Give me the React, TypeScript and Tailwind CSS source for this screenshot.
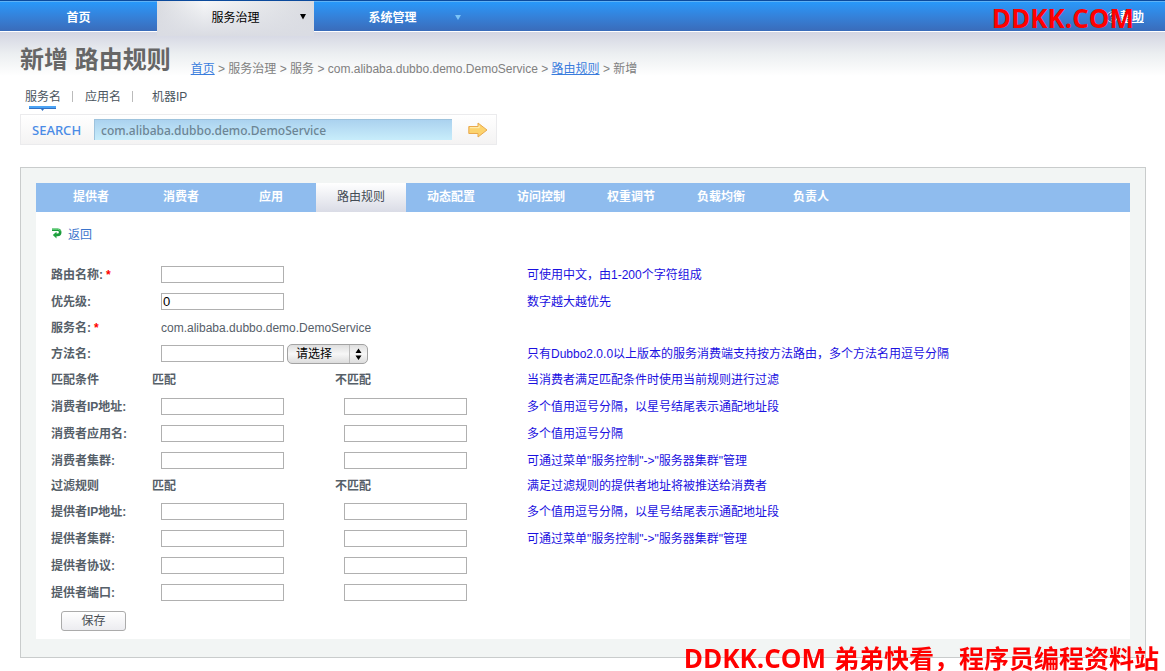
import React from "react";

type Field = {
  id: string;
  label: string;
  hint?: string;
};

const tabs = ["提供者", "消费者", "应用", "路由规则", "动态配置", "访问控制", "权重调节", "负载均衡", "负责人"];

const consumerFields: Field[] = [
  { id: "consumer-ip", label: "消费者IP地址:", hint: "多个值用逗号分隔，以星号结尾表示通配地址段" },
  { id: "consumer-app", label: "消费者应用名:", hint: "多个值用逗号分隔" },
  { id: "consumer-cluster", label: "消费者集群:", hint: '可通过菜单"服务控制"->"服务器集群"管理' },
];

const providerFields: Field[] = [
  { id: "provider-ip", label: "提供者IP地址:", hint: "多个值用逗号分隔，以星号结尾表示通配地址段" },
  { id: "provider-cluster", label: "提供者集群:", hint: '可通过菜单"服务控制"->"服务器集群"管理' },
  { id: "provider-protocol", label: "提供者协议:" },
  { id: "provider-port", label: "提供者端口:" },
];

const rowClass = "grid grid-cols-[101px_183px_192px_1fr] items-center";
const inputClass =
  "block h-[17px] w-[123px] border border-[#b0b0b0] bg-white px-px text-[13px] leading-[15px] text-black outline-none";
const labelClass = "font-bold text-[#566069]";
const hintClass = "whitespace-nowrap text-[#1a10e0]";

function Star() {
  return <span className="ml-[3px] text-[#f00]">*</span>;
}

function SectionRow({ title, hint, height }: { title: string; hint: string; height: string }) {
  return (
    <div className={`${rowClass} ${height}`}>
      <span className={labelClass}>{title}</span>
      <span className={labelClass}>匹配</span>
      <span className={labelClass}>不匹配</span>
      <span className={hintClass}>{hint}</span>
    </div>
  );
}

function PairRow({ field }: { field: Field }) {
  return (
    <div className={`${rowClass} h-[27px]`}>
      <label htmlFor={field.id} className={labelClass}>
        {field.label}
      </label>
      <div className="pl-[9px]">
        <input id={field.id} type="text" className={inputClass} />
      </div>
      <div className="pl-[9px]">
        <input id={`${field.id}-not`} aria-label={`${field.label} 不匹配`} type="text" className={inputClass} />
      </div>
      <span className={hintClass}>{field.hint}</span>
    </div>
  );
}

function Header() {
  return (
    <header className="relative border-t border-[#0b4a9c]">
      <nav className="flex h-[30px] border-t border-[#5fb2f5] bg-linear-to-b from-[#2798fa] to-[#3a6cba] text-center text-xs leading-[32px] text-white">
        <a href="#home" className="w-[157px] font-bold">
          首页
        </a>
        <a
          href="#governance"
          className="relative z-10 -mt-px h-[35px] w-[157px] bg-linear-to-r from-[#d9dbe0] via-[#f6f7f8] via-30% to-[#d9dbe0] leading-[34px] text-black"
        >
          <span className="absolute inset-0 bg-linear-to-b from-transparent to-[#dadce3]"></span>
          <span className="relative">服务治理</span>
          <svg className="absolute top-[13px] right-2 h-[6px] w-[6px]" viewBox="0 0 6 6">
            <path d="M0 0h6L3 5.5z" fill="#000" />
          </svg>
        </a>
        <a href="#system" className="relative w-[157px] font-bold">
          系统管理
          <svg className="absolute top-[13px] right-[10px] h-[5px] w-[6px]" viewBox="0 0 6 5">
            <path d="M0 0h6L3 5z" fill="#7cc4f7" />
          </svg>
        </a>
        <a href="#help" className="mr-[21px] ml-auto flex items-center gap-[2px] font-bold underline">
          <svg className="h-3 w-3" viewBox="0 0 12 12">
            <circle cx="6" cy="6" r="5.3" fill="#3b62b8" stroke="#b9d6f5" strokeWidth="1" />
            <path d="M4.2 4.6a1.8 1.8 0 1 1 2.6 1.6c-.6.3-.8.6-.8 1.1M6 8.3v1.2" fill="none" stroke="#fff" strokeWidth="1.3" />
          </svg>
          帮助
        </a>
      </nav>
    </header>
  );
}

export default function App() {
  return (
    <div className="bg-white font-['Liberation_Sans','Noto_Sans_CJK_SC',sans-serif] text-xs leading-4 text-[#566069]">
      <Header />

      <div className="border-t border-white bg-linear-to-b from-[#d3d5e2] via-[#eceff1] via-[22px] to-white to-[44px] px-5 pt-[13px]">
        <div className="flex h-8 items-end">
          <h1 className="self-start text-2xl leading-[30px] font-bold text-[#666]">新增 路由规则</h1>
          <p className="ml-5 whitespace-nowrap text-[#808080]">
            <a href="#home" className="text-[#3b7ddd] underline">
              首页
            </a>{" "}
            &gt; 服务治理 &gt; 服务 &gt; com.alibaba.dubbo.demo.DemoService &gt;{" "}
            <a href="#routes" className="text-[#3b7ddd] underline">
              路由规则
            </a>{" "}
            &gt; 新增
          </p>
        </div>

        <div className="mt-3 flex h-[25px] pl-[5px] text-[#4a555e]">
          <button type="button" className="flex flex-col items-center">
            <span className="leading-4">服务名</span>
            <svg className="mt-px mr-[2px] h-[5px] w-[27px]" viewBox="0 0 27 5">
              <path d="M0 0h27v2H0z" fill="#4aa3f5" />
              <path d="M0 2h27v1H15l-1.500 2L12 3H0z" fill="#3272c4" />
            </svg>
          </button>
          <span className="mt-[2px] ml-[11px] h-[11px] w-px bg-[#bbb]"></span>
          <button type="button" className="ml-[12px] self-start">
            应用名
          </button>
          <span className="mt-[2px] ml-[11px] h-[11px] w-px bg-[#bbb]"></span>
          <button type="button" className="ml-[19px] self-start">
            机器IP
          </button>
        </div>

        <form className="flex h-[31px] w-[477px] items-center border border-[#ebebed] bg-linear-to-b from-white to-[#f4f3f3] font-['Noto_Sans','Noto_Sans_CJK_SC',sans-serif]">
          <label htmlFor="search" className="w-[73px] pl-[11px] text-[13px] font-medium text-[#4a8be6]">
            SEARCH
          </label>
          <input
            id="search"
            type="text"
            defaultValue="com.alibaba.dubbo.demo.DemoService"
            className="h-[21px] w-[358px] border-t border-l border-[#9ec3dd] bg-linear-to-b from-[#abd2ef] to-[#c8edfb] px-[6px] text-xs font-medium text-[#6c8594] outline-none"
          />
          <button type="submit" aria-label="Search" className="ml-[16px]">
            <svg className="h-4 w-5" viewBox="0 0 20 16">
              <path d="M.8 4.500H10V1l9 7-9 7v-3.500H.8z" fill="#fcd36e" stroke="#e9a94d" strokeWidth="1" strokeLinejoin="round" />
              <path d="M2 5.700h9.200V3.500" fill="none" stroke="#fff0b8" strokeWidth="1" />
            </svg>
          </button>
        </form>
      </div>

      <main className="mt-[22px] mr-[19px] mb-3 ml-5 border border-[#c9cccc] bg-[#f2f5f4] px-[15px] pt-[15px] pb-[18px]">
        <nav className="flex h-[29px] bg-[#8fbcee] pl-[10px] text-center leading-[29px]">
          {tabs.map((tab) => (
            <a
              key={tab}
              href={`#${tab}`}
              className={
                tab === "路由规则"
                  ? "w-[90px] bg-linear-to-b from-white to-[#dadce6] text-[#444c55]"
                  : "w-[90px] font-bold text-white"
              }
            >
              {tab}
            </a>
          ))}
        </nav>

        <div className="bg-white px-[15px] pb-[8px]">
          <div className="flex h-[49px] items-start pt-[15px]">
            <a href="#back" className="flex gap-[5px] text-[#3b74cc]">
              <svg className="h-3 w-3" viewBox="0 0 12 12">
                <path d="M1 2.700h5.600a2.500 2.500 0 0 1 0 5.200H5" fill="none" stroke="#1d9a3c" strokeWidth="2.600" />
                <path d="M1 2.200h5.800a3 3 0 0 1 2.700 2" fill="none" stroke="#6fdc84" strokeWidth="1" />
                <path d="M5.500 4.800v6.700L1.800 8z" fill="#1fa53f" />
              </svg>
              返回
            </a>
          </div>

          <form>
            <div className={`${rowClass} h-[27px]`}>
              <label htmlFor="route-name" className={labelClass}>
                路由名称:
                <Star />
              </label>
              <div className="col-span-2 pl-[9px]">
                <input id="route-name" type="text" className={inputClass} />
              </div>
              <span className={hintClass}>可使用中文，由1-200个字符组成</span>
            </div>
            <div className={`${rowClass} h-[27px]`}>
              <label htmlFor="priority" className={labelClass}>
                优先级:
              </label>
              <div className="col-span-2 pl-[9px]">
                <input id="priority" type="text" defaultValue="0" className={inputClass} />
              </div>
              <span className={hintClass}>数字越大越优先</span>
            </div>
            <div className={`${rowClass} h-[25px]`}>
              <span className={labelClass}>
                服务名:
                <Star />
              </span>
              <span className="col-span-2 pl-[9px]">com.alibaba.dubbo.demo.DemoService</span>
            </div>
            <div className={`${rowClass} h-[27px]`}>
              <label htmlFor="method" className={labelClass}>
                方法名:
              </label>
              <div className="col-span-2 flex items-center gap-[3px] pl-[9px]">
                <input id="method" type="text" className={inputClass} />
                <div className="relative">
                  <select
                    aria-label="方法名"
                    className="block h-5 w-[81px] appearance-none rounded-[5px] border border-[#a3a3a3] bg-linear-to-b from-[#dfdfdf] via-[#f7f7f7] to-[#dcdcdc] pl-2 text-xs leading-[18px] text-black"
                  >
                    <option>请选择</option>
                  </select>
                  <svg className="pointer-events-none absolute top-px right-0 h-[18px] w-[19px]" viewBox="0 0 19 18">
                    <path d="M.5 0v18" stroke="#bbb" />
                    <path d="M6.500 8h6l-3-4.500zM6.500 10.500h6l-3 4.500z" fill="#000" />
                  </svg>
                </div>
              </div>
              <span className={hintClass}>只有Dubbo2.0.0以上版本的服务消费端支持按方法路由，多个方法名用逗号分隔</span>
            </div>

            <SectionRow title="匹配条件" hint="当消费者满足匹配条件时使用当前规则进行过滤" height="h-[26px]" />
            {consumerFields.map((field) => (
              <PairRow key={field.id} field={field} />
            ))}

            <SectionRow title="过滤规则" hint="满足过滤规则的提供者地址将被推送给消费者" height="h-[24px]" />
            {providerFields.map((field) => (
              <PairRow key={field.id} field={field} />
            ))}

            <button
              type="submit"
              className="mt-[5px] ml-[10px] block h-5 w-[65px] rounded-[3px] border border-[#ababab] bg-linear-to-b from-white to-[#ececf0] leading-[18px] text-[#4a4f55]"
            >
              保存
            </button>
          </form>
        </div>
      </main>

      <div className="pointer-events-none absolute top-0 right-[31px] z-20 font-['Open_Sans','Noto_Sans_CJK_SC',sans-serif] text-[26px] leading-9 font-bold text-[#f00]">
        DDKK.COM
      </div>
      <div className="pointer-events-none fixed right-[6px] bottom-0 z-20 flex gap-[8px] font-['Open_Sans','Noto_Sans_CJK_SC',sans-serif] leading-[26px] font-bold whitespace-nowrap text-[#f00]">
        <span className="text-[26px]">DDKK.COM</span>
        <span className="text-[25px]">弟弟快看，程序员编程资料站</span>
      </div>
    </div>
  );
}
